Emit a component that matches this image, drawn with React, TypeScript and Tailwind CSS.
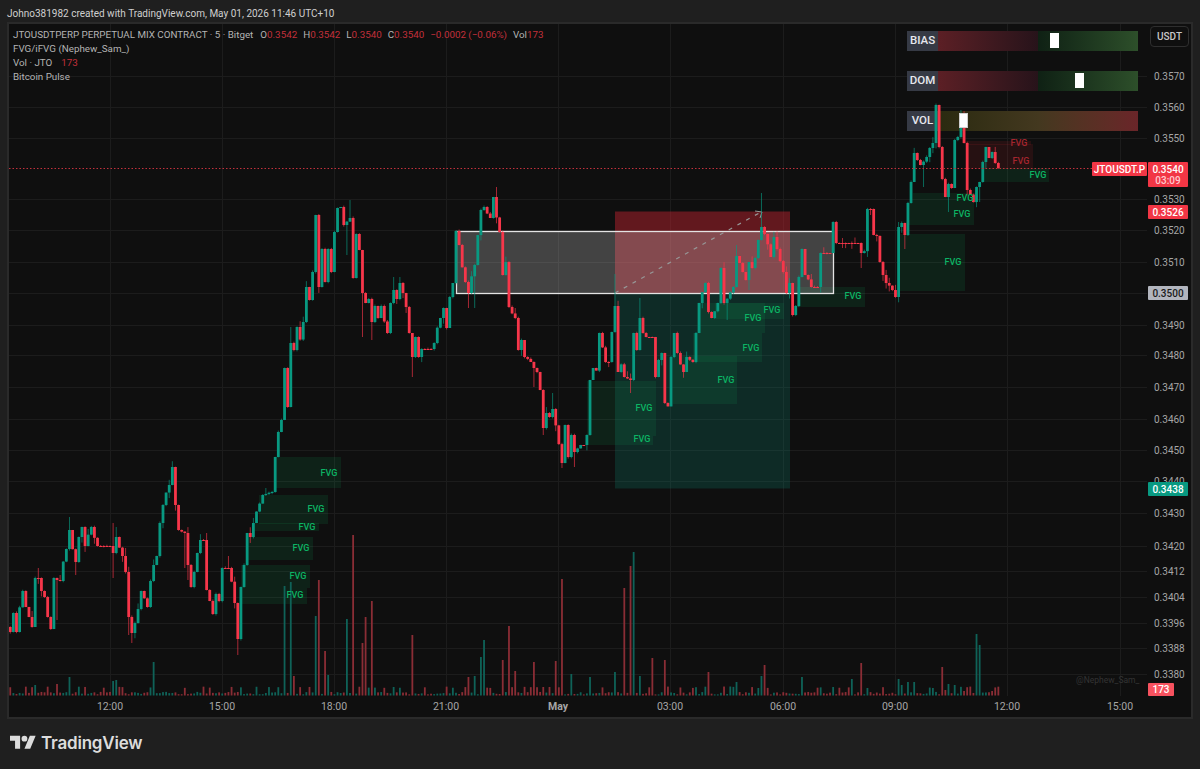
import React from "react";

const TEAL = "#089981";
const RED = "#f7364a";

const W: [number, number][] = [
  [9,632],[13,613],[16,632],[22,591],[25,607],[28,617],[32,627],[34,578],[38,578],[41,591],[44,597],[47,617],[51,629],[53,578],[59,581],[66,549],[69,530],[75,562],[79,537],[82,527],[84,546],[91,527],[97,546],[109,546],[112,553],[116,537],[122,556],[126,572],[128,617],[132,633],[135,623],[142,591],[147,607],[150,581],[154,565],[157,556],[159,523],[163,505],[168,485],[172,467],[176,505],[179,530],[184,533],[188,565],[191,587],[194,572],[197,553],[200,540],[202,540],[206,590],[210,601],[213,614],[216,594],[219,601],[222,568],[230,568],[234,603],[238,639],[241,587],[243,565],[247,533],[250,537],[252,523],[263,495],[271,492],[275,457],
  [278,432],[281,420],[284,368],[289,407],[291,343],[295,350],[297,327],[302,347],[303,322],[307,287],[310,300],[313,272],[316,215],[319,287],[322,249],[326,282],[328,249],[332,272],[335,232],[337,208],[340,207],[344,225],[350,218],[353,278],[357,234],[360,250],[362,293],[366,303],[368,299],[373,322],[375,306],[378,318],[382,306],[386,333],[389,303],[393,290],[397,299],[399,283],[403,293],[407,307],[410,333],[413,357],[416,337],[419,357],[422,349],[430,349],[433,343],[440,318],[443,308],[448,328],[450,297],[453,283],[456,231],
  [458,245],[465,282],[468,293],[474,265],[481,210],[483,207],[490,218],[493,197],[499,232],[503,275],[507,262],[508,307],[515,318],[518,350],[521,340],[525,357],[532,362],[534,368],[537,372],[541,390],[544,428],[547,413],[550,417],[553,409],[562,463],[565,425],[569,457],[572,435],[575,452],[580,445],[585,445],[588,435],[591,380],[593,368],[598,372],[600,333],[605,362],[610,362],[613,332],[616,306],[618,372],[623,360],[625,377],[630,380],[633,333],[637,350],[640,318],[643,333],[647,337],[652,337],[654,377],[658,360],[662,353],[666,403],[670,410],[672,357],[675,333],[678,353],[682,372],[687,357],[692,362],[696,333],
  [699,303],[705,283],[709,312],[712,318],[718,303],[722,268],[725,303],[733,287],[737,256],[743,272],[746,280],[749,262],[753,268],[756,258],[758,240],[762,227],[765,234],[771,257],[774,237],[777,249],[783,272],[787,293],[790,283],[793,315],[797,306],[800,277],[803,249],[806,275],[812,287],[821,287],[822,253],[833,253],[834,222],[836,243],[857,243],[862,253],[867,249],[868,209],[873,209],[874,235],[880,237],[881,262],[884,275],[887,283],[893,290],[897,297],[899,227],[902,223],[906,235],[909,203],[912,182],[915,153],[917,160],[921,165],[927,157],[931,148],[934,143],[936,105],[939,104],[940,147],[943,179],[946,197],[948,184],[952,188],[956,140],[958,137],[961,117],[965,143],[968,190],[974,202],[977,187],[980,182],[983,162],[987,147],[990,158],[993,152],[995,163],[998,168],
];

const XWICK: [number, number][] = [
  [38,568],[56,620],[69,517],[75,575],[113,578],[113,523],[116,527],[128,635],[131,643],[125,548],[184,568],[188,580],[200,537],[206,533],[228,556],[238,655],[349,200],[347,255],[362,337],[372,340],[412,377],[290,327],[393,277],[470,308],[474,308],[496,187],[533,387],[543,435],[575,467],[562,468],[552,393],[630,393],[640,298],[616,274],[762,193],[727,320],[737,245],[749,290],[861,268],[905,249],[898,222],[923,187],[948,212],[961,110],[980,202],[986,168],
];

const noise = (n: number) => {
  const s = Math.sin(n * 12.9898 + 4.1) * 43758.5453;
  return s - Math.floor(s);
};

const STEP = 3.117;
const X0 = 110 - 32 * STEP;

const closeAt = (x: number) => {
  let hit: number | null = null;
  for (const [a, b] of W) {
    if (a > x - STEP / 2 && a <= x + STEP / 2) hit = b;
  }
  if (hit !== null) return hit;
  for (let i = 1; i < W.length; i++) {
    if (x <= W[i][0]) {
      const [a, b] = W[i - 1];
      const [c, d] = W[i];
      return c === a ? d : b + ((d - b) * (x - a)) / (c - a);
    }
  }
  return W[W.length - 1][1];
};

type Candle = { x: number; o: number; c: number; t: number; b: number };
const candles: Candle[] = [];
for (let i = 0; i <= 317; i++) {
  const x = X0 + i * STEP;
  const c = closeAt(x);
  const o = i === 0 ? 627 : candles[i - 1].c;
  const n = noise(i);
  const m = noise(i + 500);
  candles.push({
    x,
    o,
    c,
    t: Math.min(o, c) - (n > 0.82 ? 6 * n : n * 2),
    b: Math.max(o, c) + (m > 0.82 ? 6 * m : m * 2),
  });
}
XWICK.forEach(([x, y]) => {
  const i = Math.max(0, Math.min(317, Math.round((x - X0) / STEP)));
  const k = candles[i];
  if (y < k.t) k.t = y;
  if (y > k.b) k.b = y;
});

const VT = "#0f6258";
const VR = "#8a2d35";
const TALL: [number, number, string][] = [
  [284,586,VT],[291,582,VT],[319,580,VR],[316,616,VT],[325,651,VR],[347,619,VT],[68,677,VT],[153,662,VT],[294,676,VR],[328,675,VT],[57,684,VR],[35,685,VT],[112,681,VT],[116,680,VT],
  [353,535,VR],[362,643,VR],[366,617,VR],[372,601,VR],[412,635,VR],[468,677,VR],[475,676,VT],[481,657,VT],[484,640,VT],[502,660,VR],[509,626,VR],[515,671,VR],[534,662,VR],[556,661,VR],[562,579,VR],[572,674,VT],[590,677,VT],[615,672,VT],[624,588,VR],[631,566,VR],[634,552,VT],[640,676,VT],[652,658,VR],[665,660,VR],[708,672,VR],[737,682,VT],
  [758,688,VT],[762,676,VT],[765,665,VR],[802,677,VT],[852,679,VT],[862,663,VR],[867,688,VT],[899,679,VT],[902,685,VT],[908,682,VT],[915,682,VT],[933,688,VT],[942,667,VR],[946,690,VR],[949,684,VT],[955,685,VT],[977,634,VT],[980,645,VT],[964,691,VR],[993,691,VR],
];
const BASE = 695.5;
const vols = candles.map((k, i) => {
  const r = noise(i + 900);
  return {
    x: k.x,
    top: BASE - (r > 0.75 ? 3 + r * 6 : 1 + r * 3.5),
    col: k.c < k.o ? VT : VR,
  };
});
TALL.forEach(([x, y, col]) => {
  const i = Math.round((x - X0) / STEP);
  if (vols[i]) {
    vols[i].top = y;
    vols[i].col = col;
  }
});

const PRICES: [string, number][] = [
  ["0.3570",76],["0.3560",107],["0.3550",138],["0.3530",199],["0.3520",230],["0.3510",262],["0.3490",325],["0.3480",355],["0.3470",387],["0.3460",419],["0.3450",450],["0.3440",481],["0.3430",513],["0.3420",546],["0.3412",571],["0.3404",597],["0.3396",623],["0.3388",648],["0.3380",674],
];
const TIMES: [string, number, boolean][] = [
  ["12:00",110,false],["15:00",222,false],["18:00",334,false],["21:00",446,false],["May",558,true],["03:00",670,false],["06:00",783,false],["09:00",895,false],["12:00",1007,false],["15:00",1120,false],
];

const FVG: [number, number, number, number, number, number][] = [
  [275,457,341,488,329,473],[259,495,328,524,316,509],[252,523,319,531,307,527],[248,537,313,560,301,548],[241,565,310,588,298,576],[241,588,307,604,295,595],
  [587,381,656,436,644,408],[587,436,653,445,642,439],[673,356,737,404,726,380],[693,333,762,362,751,348],[697,303,765,333,753,318],[715,303,784,319,772,310],[797,287,865,307,853,296],
  [898,234,965,291,953,262],[908,203,974,225,962,214],[913,193,977,203,965,198],[983,168,1049,182,1038,175],
];
const FVGR: [number, number, number, number, number, number][] = [
  [967,144,1033,169,1021,161],[967,141,1031,145,1019,143],
];

function Grid() {
  return (
    <svg width={1182} height={693} viewBox="9 24 1182 693" className="absolute left-0 top-0 block">
      {PRICES.concat([["",293]]).map(([, y]) => (
        <line key={y} x1={9} x2={1147} y1={y + 0.5} y2={y + 0.5} stroke="#1c1c1c" />
      ))}
      {TIMES.map(([, x]) => (
        <line key={x} x1={x + 0.5} x2={x + 0.5} y1={24} y2={696} stroke="#1c1c1c" />
      ))}
    </svg>
  );
}

function Chart() {
  return (
    <svg width={1182} height={693} viewBox="9 24 1182 693" className="relative z-10 block" style={{ fontFamily: "Roboto, sans-serif" }}>
      <rect x={615} y={211.5} width={175} height={81.5} fill="#b5222e" fillOpacity={0.5} />
      <rect x={615} y={293} width={175} height={195.5} fill="#089981" fillOpacity={0.2} />
      {FVG.map(([a, b, c, d]) => (
        <rect key={a + "-" + b} x={a} y={b} width={c - a} height={d - b} fill="#0c9a55" fillOpacity={0.14} />
      ))}
      {FVGR.map(([a, b, c, d]) => (
        <rect key={a + "-" + b} x={a} y={b} width={c - a} height={d - b} fill="#b5222e" fillOpacity={0.14} />
      ))}
      <rect x={456.5} y={231.5} width={377} height={62} fill="#ffffff" fillOpacity={0.22} stroke="#e4e4e4" strokeWidth={1.3} />
      <line x1={615} y1={293} x2={761} y2={212} stroke="#979797" strokeWidth={1.2} strokeDasharray="4 6" />
      <path d="M755 211L762 212L760 218" fill="none" stroke="#979797" strokeWidth={1} />

      {vols.map((v, i) => (
        <rect key={i} x={v.x - 0.9} y={v.top} width={1.8} height={BASE - v.top} fill={v.col} />
      ))}

      {candles.map((k, i) => {
        const up = k.c < k.o;
        const col = up ? TEAL : RED;
        const y = Math.min(k.o, k.c);
        const h = Math.max(Math.abs(k.o - k.c), 1);
        return (
          <g key={i}>
            <rect x={k.x - 0.5} y={k.t} width={1} height={k.b - k.t} fill={col} fillOpacity={0.65} />
            <rect x={k.x - 1.4} y={y} width={2.8} height={h} fill={col} />
          </g>
        );
      })}

      <line x1={9} x2={1092} y1={168.5} y2={168.5} stroke="#c2313d" strokeDasharray="1.5 2" />

      {FVG.map(([a, b, , , x, y]) => (
        <text key={a + "-" + b} x={x} y={y + 3} textAnchor="middle" fontSize={9} fontWeight={500} fill="#0cb464">
          FVG
        </text>
      ))}
      {FVGR.map(([a, b, , , x, y]) => (
        <text key={a + "-" + b} x={x} y={y + 3} textAnchor="middle" fontSize={9} fontWeight={500} fill="#a5262f">
          FVG
        </text>
      ))}

      {PRICES.map(([t, y]) => (
        <text key={y} x={1154} y={y + 3.5} fontSize={10} fill="#a6a6a6">
          {t}
        </text>
      ))}
      {TIMES.map(([t, x, b]) => (
        <text key={x} x={x} y={710} textAnchor="middle" fontSize={10.5} fontWeight={b ? 700 : 400} fill="#a6a6a6">
          {t}
        </text>
      ))}
      <text x={1076} y={683} fontSize={8.5} fill="#343434">
        @Nephew_Sam_
      </text>
    </svg>
  );
}

function Meter({
  label,
  thumb,
  bars,
}: {
  label: string;
  thumb: React.ReactNode;
  bars: React.ReactNode;
}) {
  return (
    <div className="flex h-5 w-[231px]">
      <div className="flex w-[31px] items-center justify-center bg-[#363a45] text-[11.5px] font-medium text-[#e6e8ee]">{label}</div>
      <div className="relative flex flex-1">
        {bars}
        {thumb}
      </div>
    </div>
  );
}

const RedGreen = () => (
  <>
    <div className="h-full w-[100px] bg-gradient-to-r from-[#5c1f25] to-[#27131a]" />
    <div className="h-full w-[100px] bg-gradient-to-r from-[#0f2114] to-[#2d4f2a]" />
  </>
);

const Tag = ({ className, children }: { className: string; children: React.ReactNode }) => (
  <div className={className}>{children}</div>
);

export default function App() {
  return (
    <div className="flex h-[769px] w-[1200px] flex-col overflow-hidden bg-[#1f1f1f] font-['Roboto',sans-serif]">
      <header className="flex h-[22px] items-center pl-[7px] pt-[5px] text-[10px] text-[#cfcfcf]">
        Johno381982 created with TradingView.com, May 01, 2026 11:46 UTC+10
      </header>

      <main className="relative ml-[7px] h-[697px] w-[1186px] border-2 border-[#2a2a2a] bg-[#0f0f0f]">
        <Grid />
        <div className="absolute left-[898px] top-[7px] flex flex-col gap-5">
          <Meter label="BIAS" bars={<RedGreen />} thumb={<div className="absolute left-[112px] top-[2px] z-20 h-[15px] w-[9px] bg-white" />} />
          <Meter label="DOM" bars={<RedGreen />} thumb={<div className="absolute left-[137px] top-[2px] z-20 h-[15px] w-[9px] bg-white" />} />
          <Meter
            label="VOL"
            bars={<div className="h-full w-[200px] bg-gradient-to-r from-[#2a2a10] via-[#43381f] to-[#6a2529]" />}
            thumb={<div className="absolute left-[21px] top-[2px] z-20 h-[15px] w-[9px] border border-[#cfcfcf] bg-white" />}
          />
        </div>

        <Chart />

        <div className="absolute left-[4px] top-[4px] z-20 flex flex-col text-[9.8px] leading-[14px] text-[#b4b4b4]">
          <div className="flex gap-[6px]">
            <span>JTOUSDTPERP PERPETUAL MIX CONTRACT · 5 · Bitget</span>
            <span className="ml-[1px]">O<span className="text-[#c22f3b]">0.3542</span></span>
            <span>H<span className="text-[#c22f3b]">0.3542</span></span>
            <span>L<span className="text-[#c22f3b]">0.3540</span></span>
            <span>C<span className="text-[#c22f3b]">0.3540</span></span>
            <span className="text-[#c22f3b]">−0.0002 (−0.06%)</span>
            <span>Vol<span className="text-[#c22f3b]">173</span></span>
          </div>
          <div>FVG/iFVG (Nephew_Sam_)</div>
          <div>Vol · JTO<span className="ml-[9px] text-[#c22f3b]">173</span></div>
          <div>Bitcoin Pulse</div>
        </div>

        <div className="absolute left-[1141px] top-[2px] z-20 flex h-[21px] w-[39px] items-center justify-center rounded-[4px] border border-[#2e2e2e] bg-[#0f0f0f] text-[10px] font-medium text-[#c8c8c8]">
          USDT
        </div>

        <Tag className="absolute left-[1083px] top-[138px] z-20 flex h-[14px] w-[55px] items-center justify-center rounded-[1px] bg-[#f23645] text-[10px] font-medium text-white">JTOUSDT.P</Tag>
        <Tag className="absolute left-[1139px] top-[138px] z-20 flex h-[25px] w-[40px] flex-col items-center justify-center rounded-[1px] bg-[#f23645] text-[10px] font-medium leading-[11px] text-white">
          <span>0.3540</span>
          <span className="text-[#ffc9ce]">03:09</span>
        </Tag>
        <Tag className="absolute left-[1139px] top-[181px] z-20 flex h-[14px] w-[40px] items-center justify-center rounded-[1px] bg-[#f23645] text-[10px] font-medium text-white">0.3526</Tag>
        <Tag className="absolute left-[1139px] top-[262px] z-20 flex h-[14px] w-[40px] items-center justify-center rounded-[1px] bg-[#b2b5be] text-[10px] font-medium text-[#1a1a1a]">0.3500</Tag>
        <Tag className="absolute left-[1139px] top-[458px] z-20 flex h-[14px] w-[40px] items-center justify-center rounded-[1px] bg-[#089981] text-[10px] font-medium text-white">0.3438</Tag>
        <Tag className="absolute left-[1139px] top-[659px] z-20 flex h-[13px] w-[26px] items-center justify-center rounded-[1px] bg-[#f7525f] text-[10px] font-medium text-white">173</Tag>
      </main>

      <footer className="flex flex-1 items-center gap-[5px] pb-[2px] pl-[10px] text-[#dcdcdc]">
        <svg width={26} height={18} viewBox="0 2 36 24" fill="#dcdcdc">
          <path d="M14 22H7V11H0V4h14v18zM28 22h-8l7.5-18h8L28 22z" />
          <circle cx="20" cy="8" r="4" />
        </svg>
        <span className="font-['Inter',sans-serif] text-[17px] font-semibold leading-none tracking-[-0.2px]">TradingView</span>
      </footer>
    </div>
  );
}
